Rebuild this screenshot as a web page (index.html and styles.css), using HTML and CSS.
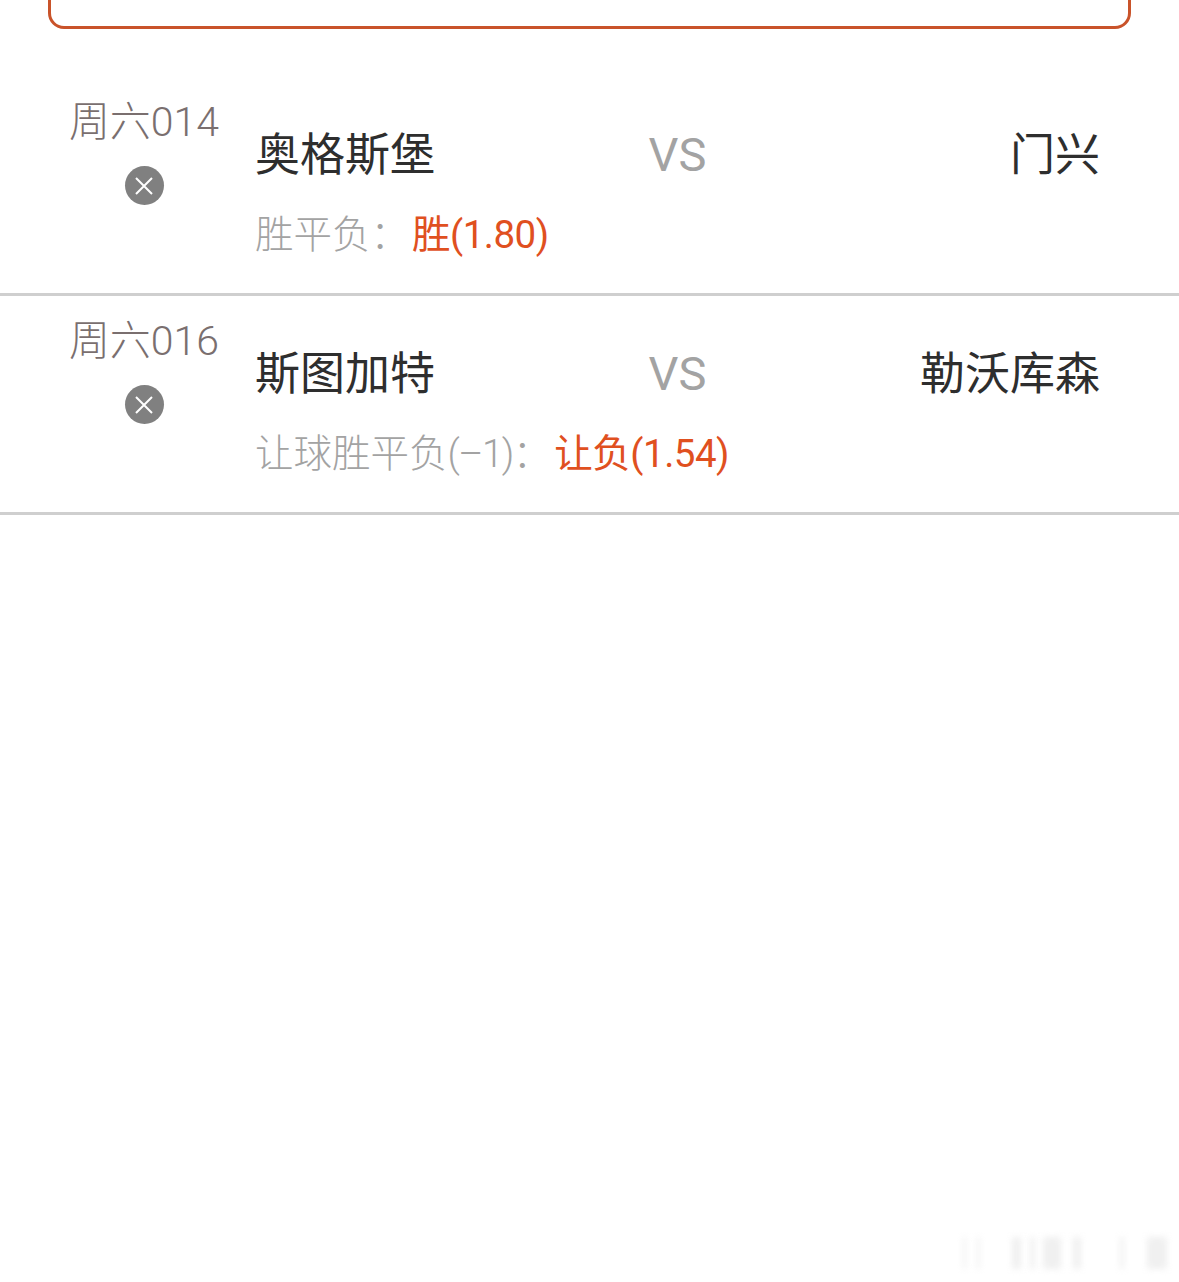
FILE: index.html
```html
<!DOCTYPE html>
<html lang="zh-CN">
<head>
  <meta charset="UTF-8">
  <title>投注单</title>
  <link rel="stylesheet" href="styles.css">
</head>
<body>

<div class="top-box"></div>

<div class="match">
  <div class="match-left">
    <div class="match-no">周六014</div>
    <div class="del-btn">
      <svg width="20" height="20" viewBox="0 0 20 20"><path d="M2 2L18 18M18 2L2 18" stroke="#fff" stroke-width="2" fill="none"/></svg>
    </div>
  </div>
  <div class="match-right">
    <div class="teams">
      <span class="team">奥格斯堡</span>
      <span class="vs">VS</span>
      <span class="team">门兴</span>
    </div>
    <div class="pick">
      <span class="pick-label">胜平负：</span>
      <span class="pick-val">胜(1.80)</span>
    </div>
  </div>
</div>

<div class="match">
  <div class="match-left">
    <div class="match-no">周六016</div>
    <div class="del-btn">
      <svg width="20" height="20" viewBox="0 0 20 20"><path d="M2 2L18 18M18 2L2 18" stroke="#fff" stroke-width="2" fill="none"/></svg>
    </div>
  </div>
  <div class="match-right">
    <div class="teams">
      <span class="team">斯图加特</span>
      <span class="vs">VS</span>
      <span class="team">勒沃库森</span>
    </div>
    <div class="pick">
      <span class="pick-label">让球胜平负<span class="handicap">(–1)</span>：</span>
      <span class="pick-val">让负(1.54)</span>
    </div>
  </div>
</div>

<!-- 右下角水印，原图是模糊的 -->
<div class="watermark">
  <i class="wm-a"></i>
  <i class="wm-f"></i>
  <i class="wm-b"></i>
  <i class="wm-g"></i>
  <i class="wm-c"></i>
  <i class="wm-d"></i>
  <i class="wm-h"></i>
  <i class="wm-e"></i>
</div>

</body>
</html>
```

FILE: styles.css
```css
html, body {
  height: 100%;
}
body {
  margin: 0;
  background: #fff;
  font-family: Roboto, "Noto Sans CJK SC", sans-serif;
  font-weight: 300;
  overflow: hidden;
  position: relative;
}
.top-box {
  height: 81px;
  margin: -52px 48px 48px;
  border: 3px solid #c9532a;
  border-radius: 16px;
  box-sizing: border-box;
}
.match {
  display: flex;
  height: 219px;
  box-sizing: border-box;
  border-bottom: 3px solid #cfcfcf;
}
.match-left {
  width: 255px;
  padding: 19px 0 0 33px;
  box-sizing: border-box;
  display: flex;
  flex-direction: column;
  align-items: center;
}
.match-no {
  font-size: 41px;
  line-height: 52px;
  color: #7a6f6f;
  white-space: nowrap;
}
.del-btn {
  width: 39px;
  height: 39px;
  margin-top: 18px;
  border-radius: 50%;
  background: #808080;
  display: flex;
  align-items: center;
  justify-content: center;
}
.match-right {
  width: 845px;
  padding-top: 41px;
}
.teams {
  display: flex;
  justify-content: space-between;
  align-items: center;
  position: relative;
  height: 66px;
}
.team {
  font-size: 45px;
  color: #2e2e2e;
  font-weight: 400;
  white-space: nowrap;
}
.vs {
  position: absolute;
  left: 0;
  right: 0;
  padding-top: 6px;
  text-align: center;
  font-size: 47px;
  font-weight: 400;
  color: #a3a3a3;
}
.pick {
  margin-top: 26px;
  font-size: 38.5px;
  line-height: 50px;
  white-space: nowrap;
  display: flex;
  gap: 3px;
}
.pick-label {
  color: #a3a3a3;
}
.handicap {
  letter-spacing: -1.5px;
}
.pick-val {
  color: #e0501f;
  font-weight: 400;
  letter-spacing: -0.5px;
}
.watermark i {
  position: absolute;
  bottom: 13px;
  height: 32px;
  background: #dedede;
  filter: blur(3px);
  opacity: .45;
}
.wm-a { left: 963px; width: 3px; }
.wm-f { left: 977px; width: 3px; }
.wm-b { left: 1012px; width: 9px; }
.wm-g { left: 1030px; width: 5px; }
.wm-c { left: 1043px; width: 18px; }
.wm-d { left: 1073px; width: 8px; }
.wm-h { left: 1120px; width: 4px; }
.wm-e { left: 1147px; width: 20px; }
```
